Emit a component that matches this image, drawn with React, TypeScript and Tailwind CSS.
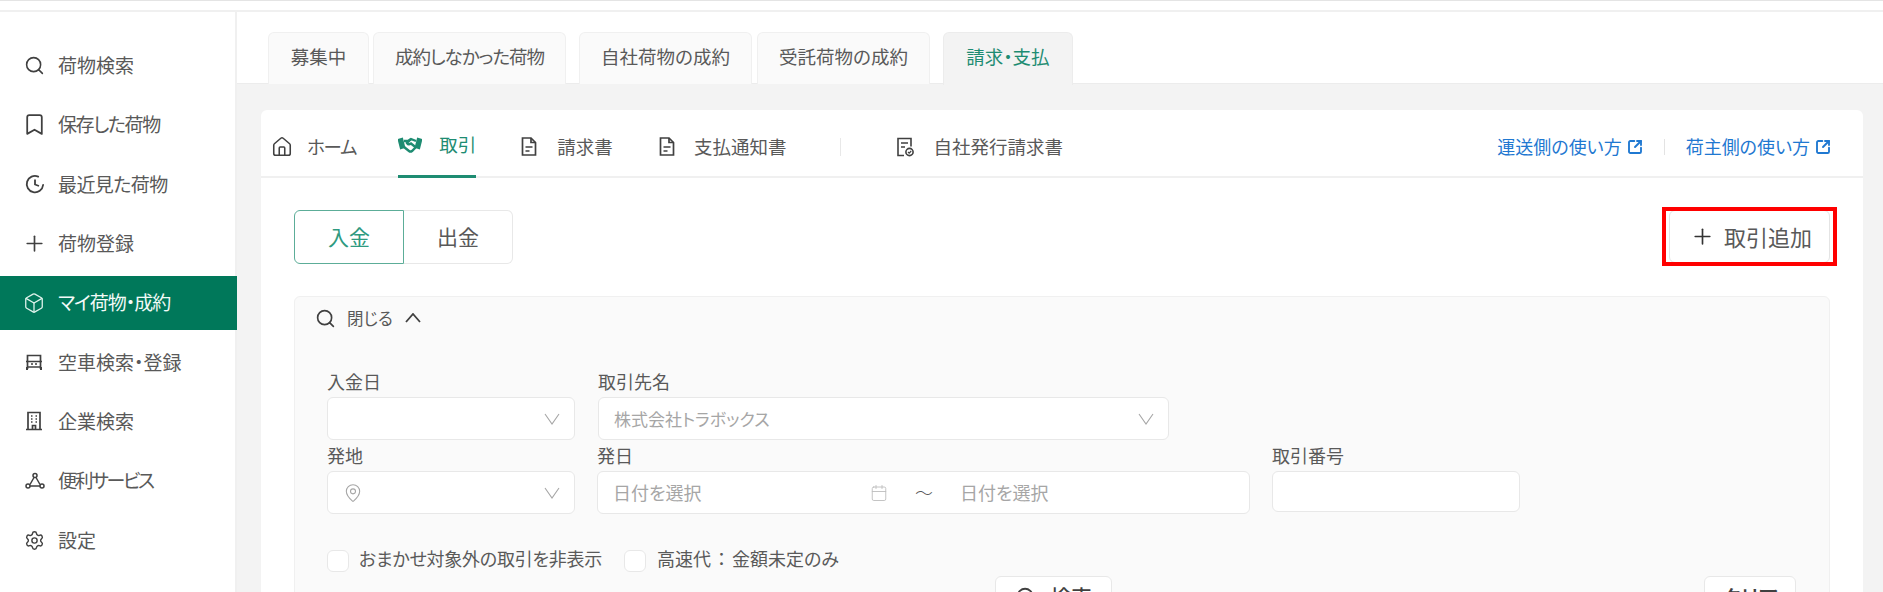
import { ReactNode } from "react";
import {
  Bookmark,
  Box,
  Calendar,
  House,
  MapPin,
  Plus,
  Search,
  Settings,
  SquareArrowOutUpRight,
} from "lucide-react";

const RecentIcon = () => (
  <svg width="20" height="20" viewBox="0 0 20 20" fill="none" stroke="#404040" strokeWidth="1.8">
    <path d="M13.2 2.6A8.2 8.2 0 1 0 18.1 11" strokeLinecap="round" />
    <path d="M10 5.5v5l4 1.5" />
  </svg>
);

const TruckIcon = () => (
  <svg width="18" height="18" viewBox="0 0 18 18" fill="none" stroke="#404040" strokeWidth="1.7">
    <path d="M2.5 16V2.5h13V16" />
    <path d="M1 8.5h16M2.5 14h13" />
    <path d="M6 11h2M10 11h2" />
    <path d="M2 14v3M16 14v3" strokeWidth="2" />
  </svg>
);

const BuildingIcon = () => (
  <svg width="18" height="20" viewBox="0 0 18 20" fill="none" stroke="#404040" strokeWidth="1.7">
    <path d="M3 18.5V1.5h12v17M1 18.5h16" />
    <path d="M7.5 18.5v-4h3v4" />
    <path d="M6 5h1.5M10.5 5H12M6 8h1.5M10.5 8H12M6 11h1.5M10.5 11H12" />
  </svg>
);

const ServiceIcon = () => (
  <svg width="20" height="18" viewBox="0 0 20 18" fill="none" stroke="#404040" strokeWidth="1.5">
    <circle cx="10" cy="3.5" r="2" />
    <circle cx="3" cy="14" r="2" />
    <circle cx="17" cy="14" r="2" />
    <path d="M9 5.5 5 12.5M11 5.5l4 7M5 14h10" />
  </svg>
);

const IssuedIcon = () => (
  <svg width="18" height="20" viewBox="0 0 18 20" fill="none" stroke="#404040" strokeWidth="1.6">
    <path d="M8 18.5H2V1.5h13v8" />
    <path d="M5 6h7M5 10h4" />
    <circle cx="13.5" cy="15" r="3.6" />
    <path d="m12 15 1.2 1.2 2-2.2" strokeWidth="1.2" />
  </svg>
);

const DocIcon = () => (
  <svg width="16" height="19" viewBox="0 0 16 19" fill="none" stroke="#404040" strokeWidth="1.7">
    <path d="M1.5 1h8.5l4.500 4.500V18h-13z" />
    <path d="M10 1v4.500h4.500" />
    <path d="M4.500 10h7M4.500 14h4" />
  </svg>
);

const HandshakeIcon = () => (
  <svg width="24" height="16" viewBox="0 0 24 16" fill="none" stroke="#1e8c72" strokeWidth="2.4">
    <path d="M1 3l3-1 2 8-3 1z" fill="#1e8c72" />
    <path d="M23 3l-3-1-2 8 3 1z" fill="#1e8c72" />
    <path d="M6 4h4l3-2 5 2" />
    <path d="M6 10l5 4c1 .8 2 .8 3 0l4-4" />
    <path d="M13 2 9 6c1 1.500 2.500 1.500 4 .5l5 4" />
  </svg>
);

const Vee = () => (
  <svg width="16" height="12" viewBox="0 0 16 12" fill="none" stroke="#a6a6a6" strokeWidth="1.100">
    <path d="M1 1l7 10 7-10" />
  </svg>
);

const menu: { label: string; icon: ReactNode; cls?: string; active?: boolean }[] = [
  { label: "荷物検索", icon: <Search size={21} strokeWidth={1.8} color="#404040" className="-ml-[1px]" /> },
  { label: "保存した荷物", cls: "tracking-[-1.4px]", icon: <Bookmark size={25} strokeWidth={1.7} color="#404040" className="-ml-[3px]" /> },
  { label: "最近見た荷物", cls: "tracking-[-0.6px]", icon: <RecentIcon /> },
  { label: "荷物登録", icon: <Plus size={25} strokeWidth={1.6} color="#404040" className="-ml-[3px]" /> },
  { label: "マイ荷物・成約", cls: "tracking-[-1px]", icon: <Box size={22} strokeWidth={1.4} color="#dff3ec" className="-ml-[2px]" />, active: true },
  { label: "空車検索・登録", icon: <TruckIcon /> },
  { label: "企業検索", icon: <BuildingIcon /> },
  { label: "便利サービス", cls: "tracking-[-2.4px]", icon: <ServiceIcon /> },
  { label: "設定", icon: <Settings size={21} strokeWidth={1.6} color="#404040" className="-ml-[1px]" /> },
];

const Sidebar = () => (
  <aside className="w-[237px] shrink-0 border-r-2 border-[#f0f0f0] bg-white pt-[26px] flex flex-col gap-[5.4px]">
    {menu.map((m) => (
      <div
        key={m.label}
        className={
          m.active
            ? "h-[54px] w-[237px] shrink-0 flex items-center pl-[25px] bg-[#00785a] text-[#f2faf7] text-[19px]"
            : "h-[54px] flex items-center pl-[25px] text-[#595959] text-[19px]"
        }
      >
        <span className="w-[33px] shrink-0 flex items-center">{m.icon}</span>
        <span className={m.cls}>{m.label}</span>
      </div>
    ))}
  </aside>
);

const Tabs = () => (
  <div className="h-[72px] shrink-0 pt-[20px] pl-[31px] flex border-b border-[#ececec] text-[18.5px] text-[#595959]">
    <div className="h-[52px] w-[101px] pb-[4px] flex items-center justify-center bg-[#fafafa] border border-b-0 border-[#f0f0f0] rounded-t-md">募集中</div>
    <div className="h-[52px] w-[193px] pb-[4px] ml-[4px] flex items-center justify-center bg-[#fafafa] border border-b-0 border-[#f0f0f0] rounded-t-md tracking-[-1px]">成約しなかった荷物</div>
    <div className="h-[52px] w-[173px] pb-[4px] ml-[13px] flex items-center justify-center bg-[#fafafa] border border-b-0 border-[#f0f0f0] rounded-t-md">自社荷物の成約</div>
    <div className="h-[52px] w-[173px] pb-[4px] ml-[5px] flex items-center justify-center bg-[#fafafa] border border-b-0 border-[#f0f0f0] rounded-t-md">受託荷物の成約</div>
    <div className="h-[53px] w-[130px] pb-[4px] ml-[13px] flex items-center justify-center bg-[#f3f3f3] border border-b-0 border-[#ececec] rounded-t-md text-[#1e8c72] relative z-10">請求・支払</div>
  </div>
);

const CardHeader = () => (
  <div className="h-[68px] shrink-0 flex border-b-2 border-[#f0f0f0] pl-[10px] pr-[32px] text-[18.5px] text-[#595959]">
    <div className="h-[68px] pt-[5px] flex items-center gap-[14px]">
      <House size={22} strokeWidth={1.7} color="#404040" />
      <span className="tracking-[-1.2px]">ホーム</span>
    </div>
    <div className="h-[68px] pt-[5px] ml-[42px] flex items-center gap-[17px] border-b-[3px] border-[#1e8c72] text-[#1e8c72]">
      <HandshakeIcon />
      取引
    </div>
    <div className="h-[68px] pt-[5px] ml-[45px] flex items-center gap-[20px]">
      <DocIcon />
      請求書
    </div>
    <div className="h-[68px] pt-[5px] ml-[46px] flex items-center gap-[19px]">
      <DocIcon />
      支払通知書
    </div>
    <div className="h-[18px] w-px mt-[28px] ml-[54px] bg-[#e8e8e8]" />
    <div className="h-[68px] pt-[5px] ml-[55px] flex items-center gap-[19px]">
      <IssuedIcon />
      自社発行請求書
    </div>
    <div className="ml-auto h-[68px] pt-[5px] flex items-center text-[18px] text-[#1f78d1]">
      運送側の使い方
      <SquareArrowOutUpRight size={16} strokeWidth={2.8} className="ml-[5px]" />
      <div className="h-[16px] w-px mx-[21px] bg-[#e3e3e3]" />
      荷主側の使い方
      <SquareArrowOutUpRight size={16} strokeWidth={2.8} className="ml-[5px]" />
    </div>
  </div>
);

const Field = ({ label, width, children }: { label: string; width: string; children: ReactNode }) => (
  <div className={width}>
    <div className="h-[26px] text-[18px] leading-[20px] text-[#595959]">{label}</div>
    {children}
  </div>
);

const inputBox = "h-[43px] flex items-center bg-white border border-[#e8e8e8] rounded-md";

const FilterPanel = () => (
  <div className="mt-[32px] h-[400px] bg-[#fafafa] border border-[#f0f0f0] rounded-md">
    <div className="h-[42px] flex items-center pl-[20px] text-[#595959] text-[16.5px]">
      <Search size={21} strokeWidth={1.9} color="#404040" />
      <span className="ml-[11px]">閉じる</span>
      <svg width="16" height="10" viewBox="0 0 16 10" fill="none" stroke="#404040" strokeWidth="1.8" className="ml-[12px]">
        <path d="M1 9l7-8 7 8" />
      </svg>
    </div>
    <div className="pl-[32px] pt-[32px]">
      <div className="flex gap-[23px]">
        <Field label="入金日" width="w-[248px]">
          <div className={inputBox + " justify-end pr-[14px]"}>
            <Vee />
          </div>
        </Field>
        <Field label="取引先名" width="w-[571px]">
          <div className={inputBox + " justify-between pl-[15px] pr-[14px] text-[17px] text-[#a6a6a6]"}>
            株式会社トラボックス
            <Vee />
          </div>
        </Field>
      </div>
      <div className="flex mt-[5px]">
        <Field label="発地" width="w-[248px]">
          <div className={inputBox + " justify-between pl-[15px] pr-[14px]"}>
            <MapPin size={20} strokeWidth={1.3} color="#a6a6a6" />
            <Vee />
          </div>
        </Field>
        <Field label="発日" width="w-[653px] ml-[22px]">
          <div className={inputBox + " pl-[15px] text-[18px] text-[#a6a6a6]"}>
            <span className="w-[257px]">日付を選択</span>
            <Calendar size={18} strokeWidth={1.2} color="#bdbdbd" />
            <span className="w-[72px] text-center text-[#595959] font-light">～</span>
            日付を選択
          </div>
        </Field>
        <Field label="取引番号" width="w-[248px] ml-[22px]">
          <div className="h-[41px] bg-white border border-[#e8e8e8] rounded-md" />
        </Field>
      </div>
      <div className="flex items-center mt-[36px] text-[18px] text-[#595959] h-[22px]">
        <span className="w-[22px] h-[22px] bg-white border border-[#e8e8e8] rounded-md" />
        <span className="ml-[10px] pb-[5px] tracking-[-0.25px]">おまかせ対象外の取引を非表示</span>
        <span className="ml-[22px] w-[22px] h-[22px] bg-white border border-[#e8e8e8] rounded-md" />
        <span className="ml-[11px] pb-[5px]">
          高速代<span className="mx-[6px]">：</span>金額未定のみ
        </span>
      </div>
      <div className="flex mt-[4px]">
        <div className="ml-[668px] w-[117px] h-[44px] pb-[2px] flex items-center justify-center gap-[13px] bg-white border border-[#e8e8e8] rounded-md text-[#404040] text-[21px] font-medium">
          <Search size={22} strokeWidth={2} color="#404040" />
          検索
        </div>
        <div className="ml-[592px] w-[92px] h-[44px] pb-[2px] flex items-center justify-center bg-white border border-[#e8e8e8] rounded-md text-[#404040] text-[21px] font-medium">
          クリア
        </div>
      </div>
    </div>
  </div>
);

export default function App() {
  return (
    <div className="w-[1883px] h-[592px] overflow-hidden bg-white flex flex-col font-['Noto_Sans_CJK_JP',sans-serif] [font-feature-settings:'palt']">
      <div className="h-[12px] shrink-0 border-t border-b-2 border-t-[#e4e4e4] border-b-[#f0f0f0]" />
      <div className="flex-1 flex min-h-0">
        <Sidebar />
        <main className="flex-1 flex flex-col min-w-0">
          <Tabs />
          <div className="flex-1 min-h-0 bg-[#f3f3f3] pt-[26px] pl-[24px] pr-[20px]">
            <div className="h-[600px] bg-white rounded-t-md">
              <CardHeader />
              <div className="px-[33px] pt-[32px]">
                <div className="flex justify-between h-[54px]">
                  <div className="flex text-[21px]">
                    <div className="w-[110px] h-[54px] flex items-center justify-center border border-[#5cad98] rounded-l-md text-[#2f9a80]">入金</div>
                    <div className="w-[109px] h-[54px] flex items-center justify-center border border-l-0 border-[#e8e8e8] rounded-r-md text-[#595959]">出金</div>
                  </div>
                  <div className="relative w-[161px] h-[53px] flex items-center pl-[20px] gap-[9px] bg-white border border-[#e4e4e4] rounded-md text-[22px] text-[#595959]">
                    <Plus size={25} strokeWidth={1.6} color="#333333" />
                    取引追加
                    <div className="absolute -left-[8px] -right-[8px] -top-[4px] -bottom-[4px] border-[4px] border-[#ff0000]" />
                  </div>
                </div>
                <FilterPanel />
              </div>
            </div>
          </div>
        </main>
      </div>
    </div>
  );
}
